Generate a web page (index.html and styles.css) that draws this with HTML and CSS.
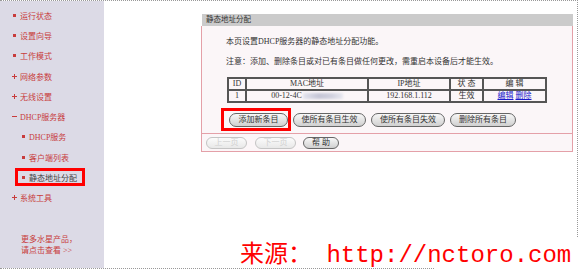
FILE: index.html
```html
<!DOCTYPE html>
<html>
<head>
	<meta charset="utf-8">
	<title>静态地址分配</title>
	<link rel="stylesheet" href="styles.css">
</head>
<body>
	<div class="frame">
		<div class="side">
			<ul class="menu">
				<li class="leaf">运行状态</li>
				<li class="leaf">设置向导</li>
				<li class="leaf">工作模式</li>
				<li class="closed">网络参数</li>
				<li class="closed">无线设置</li>
				<li class="open">DHCP服务器</li>
				<li class="sub">DHCP服务</li>
				<li class="sub">客户端列表</li>
				<li class="sub cur">静态地址分配</li>
				<li class="closed">系统工具</li>
			</ul>
			<p class="more">更多水星产品，<br>请点击查看 &gt;&gt;</p>
		</div>
		<div class="main">
			<div class="panel">
				<div class="head">静态地址分配</div>
				<div class="body">
					<p class="note">本页设置DHCP服务器的静态地址分配功能。</p>
					<p class="note">注意：添加、删除条目或对已有条目做任何更改，需重启本设备后才能生效。</p>
					<table class="list">
						<colgroup>
							<col style="width:18px"><col style="width:122px"><col style="width:82px"><col style="width:33px"><col style="width:63px">
						</colgroup>
						<tr><th>ID</th><th>MAC地址</th><th>IP地址</th><th>状 态</th><th>编 辑</th></tr>
						<tr>
							<td>1</td>
							<td>00-12-4C<span class="blur"></span></td>
							<td>192.168.1.112</td>
							<td>生效</td>
							<td><a href="#">编辑</a> <a href="#">删除</a></td>
						</tr>
					</table>
					<div class="ops">
						<span class="hl"><button class="btn w1">添加新条目</button></span>
						<button class="btn w2">使所有条目生效</button>
						<button class="btn w3">使所有条目失效</button>
						<button class="btn w4">删除所有条目</button>
					</div>
					<div class="pager">
						<button class="btn small" disabled>上一页</button>
						<button class="btn small" disabled>下一页</button>
						<button class="btn small help">帮 助</button>
					</div>
				</div>
			</div>
		</div>
	</div>
	<div class="cover"></div>
	<div class="source">来源： http://nctoro.com</div>
</body>
</html>
```

FILE: styles.css
```css
body{
	margin: 0px;
	background: #fff;
	color: #333;
	font-family: "Liberation Serif", "Noto Sans CJK SC", serif;
	font-size: 8px;
}

.frame{
	display: flex;
	width: 577px;
	height: 267px;
	border-top: 1px dotted #999;
	border-right: 1px dotted #999;
	border-bottom: 1px dotted #999;
}

/* left menu */

.side{
	flex: none;
	width: 104px;
	background: #dcdae6;
}

.menu{
	list-style: none;
	margin: 0px;
	padding: 4px 0px 0px;
}

.menu li{
	position: relative;
	display: flex;
	align-items: center;
	height: 20.3px;
	color: #c83c3c;
}

.menu li:before{
	content: "";
	display: block;
	flex: none;
}

.menu li.leaf{ padding-left: 13px; }
.menu li.leaf:before{ width: 3px; height: 3px; margin-right: 4px; background: #c83c3c; }

.menu li.closed{ padding-left: 12px; }
.menu li.closed:before{
	width: 5px;
	height: 5px;
	margin-right: 3px;
	background:
		linear-gradient(#c83c3c, #c83c3c) center / 5px 1px no-repeat,
		linear-gradient(#c83c3c, #c83c3c) center / 1px 5px no-repeat;
}

.menu li.open{ padding-left: 12px; }
.menu li.open:before{ width: 5px; height: 1px; margin-right: 3px; background: #c83c3c; }

.menu li.sub{ padding-left: 22px; }
.menu li.sub:before{ width: 3px; height: 3px; margin-right: 4px; background: #c83c3c; }

.menu li.cur{ color: #444; }

.menu li.cur:after{
	content: "";
	position: absolute;
	left: 15px;
	top: 1px;
	width: 64px;
	height: 12px;
	border: 3px solid #f00;
}

.more{
	margin: 26px 0px 0px;
	padding-left: 21px;
	line-height: 11px;
	color: #c83c3c;
}

/* main panel */

.main{
	flex: 1;
	padding: 13px 0px 0px 97px;
}

.panel{
	width: 372px;
}

.head{
	height: 12px;
	line-height: 12px;
	margin-left: 1px;
	padding-left: 4px;
	background: #cbcbcb;
	font-size: 7.5px;
	color: #333;
}

.body{
	border: 1px solid #e4a0a8;
	border-top: 0px;
	background: #fbf6f8;
	padding-top: 10px;
}

.note{
	margin: 0px 0px 0px 24px;
	line-height: 12px;
}

.note + .note{
	margin-top: 8px;
}

.list{
	margin: 9px 0px 0px 25px;
	width: 318px;
	table-layout: fixed;
	border-collapse: separate;
	border-spacing: 0px;
	border: 1px solid #555;
}

.list th, .list td{
	border: 1px solid #555;
	padding: 0px;
	height: 10px;
	line-height: 10px;
	text-align: center;
	font-weight: normal;
	white-space: nowrap;
}

.list a{
	color: #1a1acc;
}

.blur{
	display: inline-block;
	width: 40px;
	height: 6px;
	margin-left: 1px;
	vertical-align: middle;
	background: linear-gradient(90deg, #e4e4ee, #c6c6d6 40%, #d0d0de 70%, #e8e8f0);
	filter: blur(1px);
}

.ops{
	display: flex;
	gap: 5px;
	margin: 10px 0px 0px 27px;
}

.btn{
	box-sizing: border-box;
	height: 14px;
	padding: 0px;
	border: 1px solid #666;
	border-radius: 7px;
	background: linear-gradient(#f7f7f7, #d0d0d0);
	font: inherit;
	font-size: 8px;
	line-height: 12px;
	color: #333;
}

.w1{ width: 59px; }
.w2{ width: 73px; }
.w3{ width: 74px; }
.w4{ width: 66px; }

.hl{
	position: relative;
	display: flex;
}

.hl:after{
	content: "";
	position: absolute;
	left: -8px;
	right: -3px;
	top: -5px;
	bottom: -4px;
	border: 3px solid #f00;
}

.pager{
	display: flex;
	gap: 8px;
	margin-top: 6px;
	padding: 3px 0px 2px 4px;
	border-top: 1px solid #e4a0a8;
}

.btn.small{
	width: 41px;
	height: 12px;
	border-radius: 6px;
	line-height: 10px;
}

.btn.help{
	width: 36px;
	margin-left: -1px;
}

.btn:disabled{
	border-color: #c4c4c4;
	background: linear-gradient(#fbfbfb, #e8e8e8);
	color: #d0d0d0;
}

/* watermark */

.cover{
	position: absolute;
	left: 435px;
	top: 238px;
	width: 146px;
	height: 32px;
	background: #fff;
}

.source{
	position: absolute;
	left: 240px;
	top: 242px;
	font-family: "Liberation Mono", "Noto Sans CJK SC", monospace;
	font-size: 24px;
	line-height: 28px;
	color: #f00;
	white-space: pre;
}
```
